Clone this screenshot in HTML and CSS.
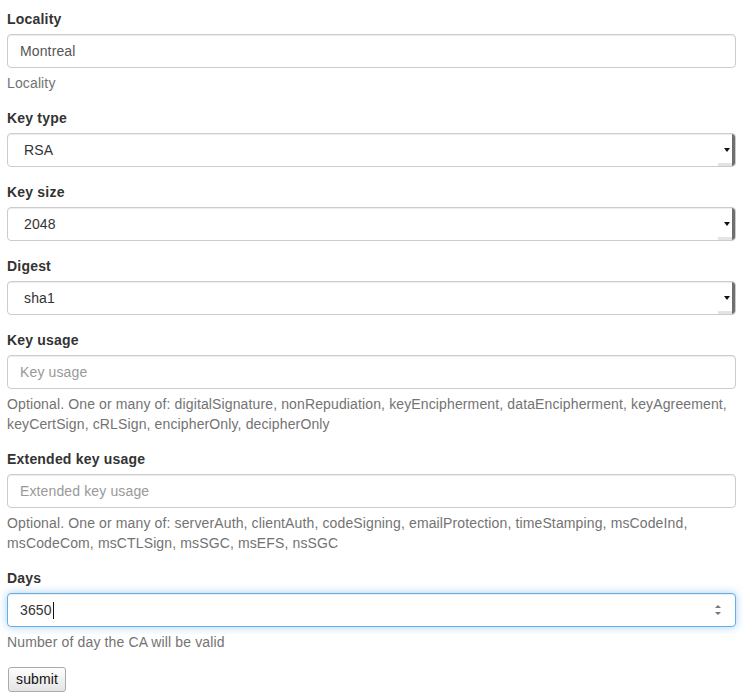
FILE: index.html
```html
<!DOCTYPE html>
<html>
<head>
<meta charset="utf-8">
<link rel="stylesheet" href="styles.css">
</head>
<body>
<form class="form">
  <div class="form-group">
    <label class="label">Locality</label>
    <div class="form-control">Montreal</div>
    <p class="help-block">Locality</p>
  </div>
  <div class="form-group">
    <label class="label">Key type</label>
    <div class="form-control select"><span class="select-value">RSA</span><span class="select-btn"><span class="tri"></span></span></div>
  </div>
  <div class="form-group">
    <label class="label">Key size</label>
    <div class="form-control select"><span class="select-value">2048</span><span class="select-btn"><span class="tri"></span></span></div>
  </div>
  <div class="form-group">
    <label class="label">Digest</label>
    <div class="form-control select"><span class="select-value">sha1</span><span class="select-btn"><span class="tri"></span></span></div>
  </div>
  <div class="form-group">
    <label class="label">Key usage</label>
    <div class="form-control placeholder">Key usage</div>
    <p class="help-block">Optional. One or many of: digitalSignature, nonRepudiation, keyEncipherment, dataEncipherment, keyAgreement, keyCertSign, cRLSign, encipherOnly, decipherOnly</p>
  </div>
  <div class="form-group">
    <label class="label">Extended key usage</label>
    <div class="form-control placeholder">Extended key usage</div>
    <p class="help-block">Optional. One or many of: serverAuth, clientAuth, codeSigning, emailProtection, timeStamping, msCodeInd, msCodeCom, msCTLSign, msSGC, msEFS, nsSGC</p>
  </div>
  <div class="form-group">
    <label class="label">Days</label>
    <div class="form-control focused number"><span class="num-value">3650<span class="caret"></span></span><span class="spinner"><span class="up"></span><span class="down"></span></span></div>
    <p class="help-block">Number of day the CA will be valid</p>
  </div>
  <button type="button" class="submit">submit</button>
</form>
</body>
</html>
```

FILE: styles.css
```css
html, body {
  margin: 0;
  padding: 0;
  background: #fff;
}
body {
  font-family: "Liberation Sans", Arial, sans-serif;
  font-size: 14px;
  line-height: 20px;
  color: #333;
  letter-spacing: 0.13px;
}
.form {
  padding: 9px 8px 0 7px;
}
.form-group {
  margin-bottom: 15px;
}
.label {
  display: block;
  font-weight: bold;
  margin-bottom: 5px;
  line-height: 20px;
  letter-spacing: 0.2px;
}
.form-control {
  box-sizing: border-box;
  height: 34px;
  padding: 6px 12px;
  border: 1px solid #ccc;
  border-radius: 4px;
  box-shadow: inset 0 1px 1px rgba(0,0,0,.075);
  color: #555;
  background: #fff;
  display: flex;
  align-items: center;
}
.placeholder {
  color: #999;
}
.help-block {
  margin: 5px 0 10px;
  color: #737373;
}
.select {
  padding: 0 0 0 16px;
  overflow: hidden;
  color: #333;
}
.select-value {
  flex: 1;
}
.select-btn {
  width: 14px;
  align-self: stretch;
  display: flex;
  align-items: center;
  justify-content: flex-end;
  border-right: 3px solid #6f6f6f;
  box-shadow: inset 0 -3px 0 #e4e4e4;
  border-radius: 0 3px 3px 0;
}
.tri {
  width: 0;
  height: 0;
  border-left: 3px solid transparent;
  border-right: 3px solid transparent;
  border-top: 4px solid #111;
  margin-right: 2px;
}
.focused {
  border-color: #66afe9;
  box-shadow: inset 0 1px 1px rgba(0,0,0,.075), 0 0 8px rgba(102,175,233,.6);
}
.number {
  padding-right: 12px;
  color: #333;
}
.num-value {
  flex: 1;
  display: flex;
  align-items: center;
}
.caret {
  display: inline-block;
  width: 1px;
  height: 17px;
  background: #111;
  margin-left: 1px;
}
.spinner {
  display: flex;
  flex-direction: column;
  align-items: center;
  gap: 4px;
  margin-right: 2px;
}
.up, .down {
  width: 0;
  height: 0;
  border-left: 3px solid transparent;
  border-right: 3px solid transparent;
}
.up {
  border-bottom: 3px solid #777;
}
.down {
  border-top: 3px solid #777;
}
.submit {
  margin: 0 0 0 1px;
  font-family: "Liberation Sans", Arial, sans-serif;
  font-size: 14px;
  line-height: 20px;
  letter-spacing: 0.13px;
  padding: 1px 7px 2px;
  color: #111;
  border: 1px solid #aaa;
  border-radius: 3px;
  background: linear-gradient(#fdfdfd, #e4e4e4);
}
```
